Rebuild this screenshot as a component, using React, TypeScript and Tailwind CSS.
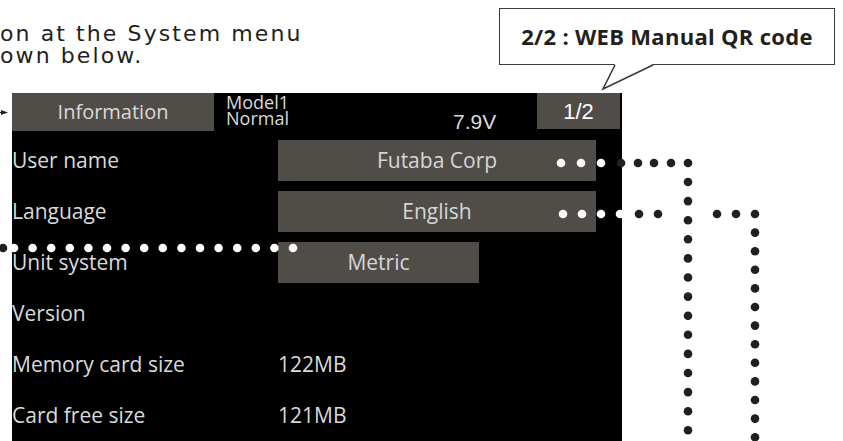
import React from 'react';

type Dot = { x: number; y: number };

// leader dots from the screen items out to the right-hand margin
const userNameDots: Dot[] = [
  ...[561, 581, 601, 621, 638, 654, 671, 688].map((x) => ({ x, y: 163 })),
  ...Array.from({ length: 15 }, (_, i) => ({ x: 688, y: 182 + i * 19.1 })),
];

const languageDots: Dot[] = [
  ...[563, 582, 601, 620, 639, 658, 717, 736, 755].map((x) => ({ x, y: 214 })),
  ...Array.from({ length: 13 }, (_, i) => ({ x: 755, y: 232.6 + i * 18.6 })),
];

const unitDots: Dot[] = [
  { x: 3, y: 248 },
  ...Array.from({ length: 16 }, (_, i) => ({ x: 14 + i * 18.6, y: 248 })),
];

const SCREEN_LEFT = 12;
const SCREEN_RIGHT = 621;

function dotFill(x: number) {
  return x > SCREEN_LEFT && x < SCREEN_RIGHT ? '#ffffff' : '#231f20';
}

function Annotations() {
  const dots = [...userNameDots, ...languageDots, ...unitDots];
  return (
    <svg
      className="absolute inset-0 pointer-events-none"
      width={843}
      height={441}
      viewBox="0 0 843 441"
    >
      {/* arrow pointing at the Information button */}
      <line x1={0} y1={112.5} x2={4} y2={112.5} stroke="#231f20" strokeWidth={1.2} />
      <polygon points="1,110 8,112.5 1,115" fill="#231f20" />

      {/* callout tail */}
      <polygon points="615,64 603,89 653,64" fill="#ffffff" />
      <polyline points="615,65 603,89 653,65" fill="none" stroke="#3a3a3a" strokeWidth={1.6} />

      {dots.map((d, i) => (
        <circle key={i} cx={d.x} cy={d.y} r={4.3} fill={dotFill(d.x)} />
      ))}
    </svg>
  );
}

function Row({ label, children }: { label: string; children?: React.ReactNode }) {
  return (
    <div className="flex h-[51px] items-center">
      <div className="w-[266px] text-[21px] text-[#dadada]">{label}</div>
      {children}
    </div>
  );
}

function ValueBox({ text, wide = true }: { text: string; wide?: boolean }) {
  return (
    <div
      className={`${wide ? 'w-[318px]' : 'w-[201px]'} flex h-[41px] items-center justify-center bg-[#504d49] text-[21px] text-[#d6d6d6]`}
    >
      {text}
    </div>
  );
}

export default function App() {
  return (
    <div className="relative h-[441px] w-[843px] overflow-hidden bg-white">
      {/* manual text, cut at the left edge */}
      <div className="h-[93px] pt-[23px] font-['DejaVu_Sans',sans-serif] text-[22px] leading-[22px] tracking-[2.1px] text-[#231f20]">
        <p>on at the System menu</p>
        <p>own below.</p>
      </div>

      {/* transmitter screen */}
      <div className="ml-[12px] flex h-[348px] w-[610px] flex-col bg-black font-['Open_Sans',sans-serif]">
        <div className="flex h-[40px]">
          <div className="flex w-[202px] items-center justify-center bg-[#504d49] text-[20px] text-[#dadada]">
            Information
          </div>
          <div className="ml-[12px] flex w-[227px] flex-col pt-[1px] text-[18px] leading-[16px] text-[#dadada]">
            <span>Model1</span>
            <span>Normal</span>
          </div>
          <div className="flex w-[84px] items-end font-['Liberation_Sans',sans-serif] text-[21px] leading-[18px] text-[#dadada]">
            7.9V
          </div>
          <div className="flex h-[36px] w-[83px] items-center justify-center bg-[#504d49] font-['Liberation_Sans',sans-serif] text-[22px] text-white">
            1/2
          </div>
        </div>

        <div className="pt-[4px]">
          <Row label="User name">
            <ValueBox text="Futaba Corp" />
          </Row>
          <Row label="Language">
            <ValueBox text="English" />
          </Row>
          <Row label="Unit system">
            <ValueBox text="Metric" wide={false} />
          </Row>
          <Row label="Version" />
          <Row label="Memory card size">
            <span className="text-[21px] text-[#dadada]">122MB</span>
          </Row>
          <Row label="Card free size">
            <span className="text-[21px] text-[#dadada]">121MB</span>
          </Row>
        </div>
      </div>

      {/* callout label */}
      <div className="absolute left-[499px] top-[8px] flex h-[57px] w-[336px] items-center justify-center border-[1.5px] border-[#3a3a3a] bg-white font-['Open_Sans',sans-serif] text-[22px] font-bold tracking-[0.3px] text-[#231f20]">
        2/2 : WEB Manual QR code
      </div>

      <Annotations />
    </div>
  );
}
